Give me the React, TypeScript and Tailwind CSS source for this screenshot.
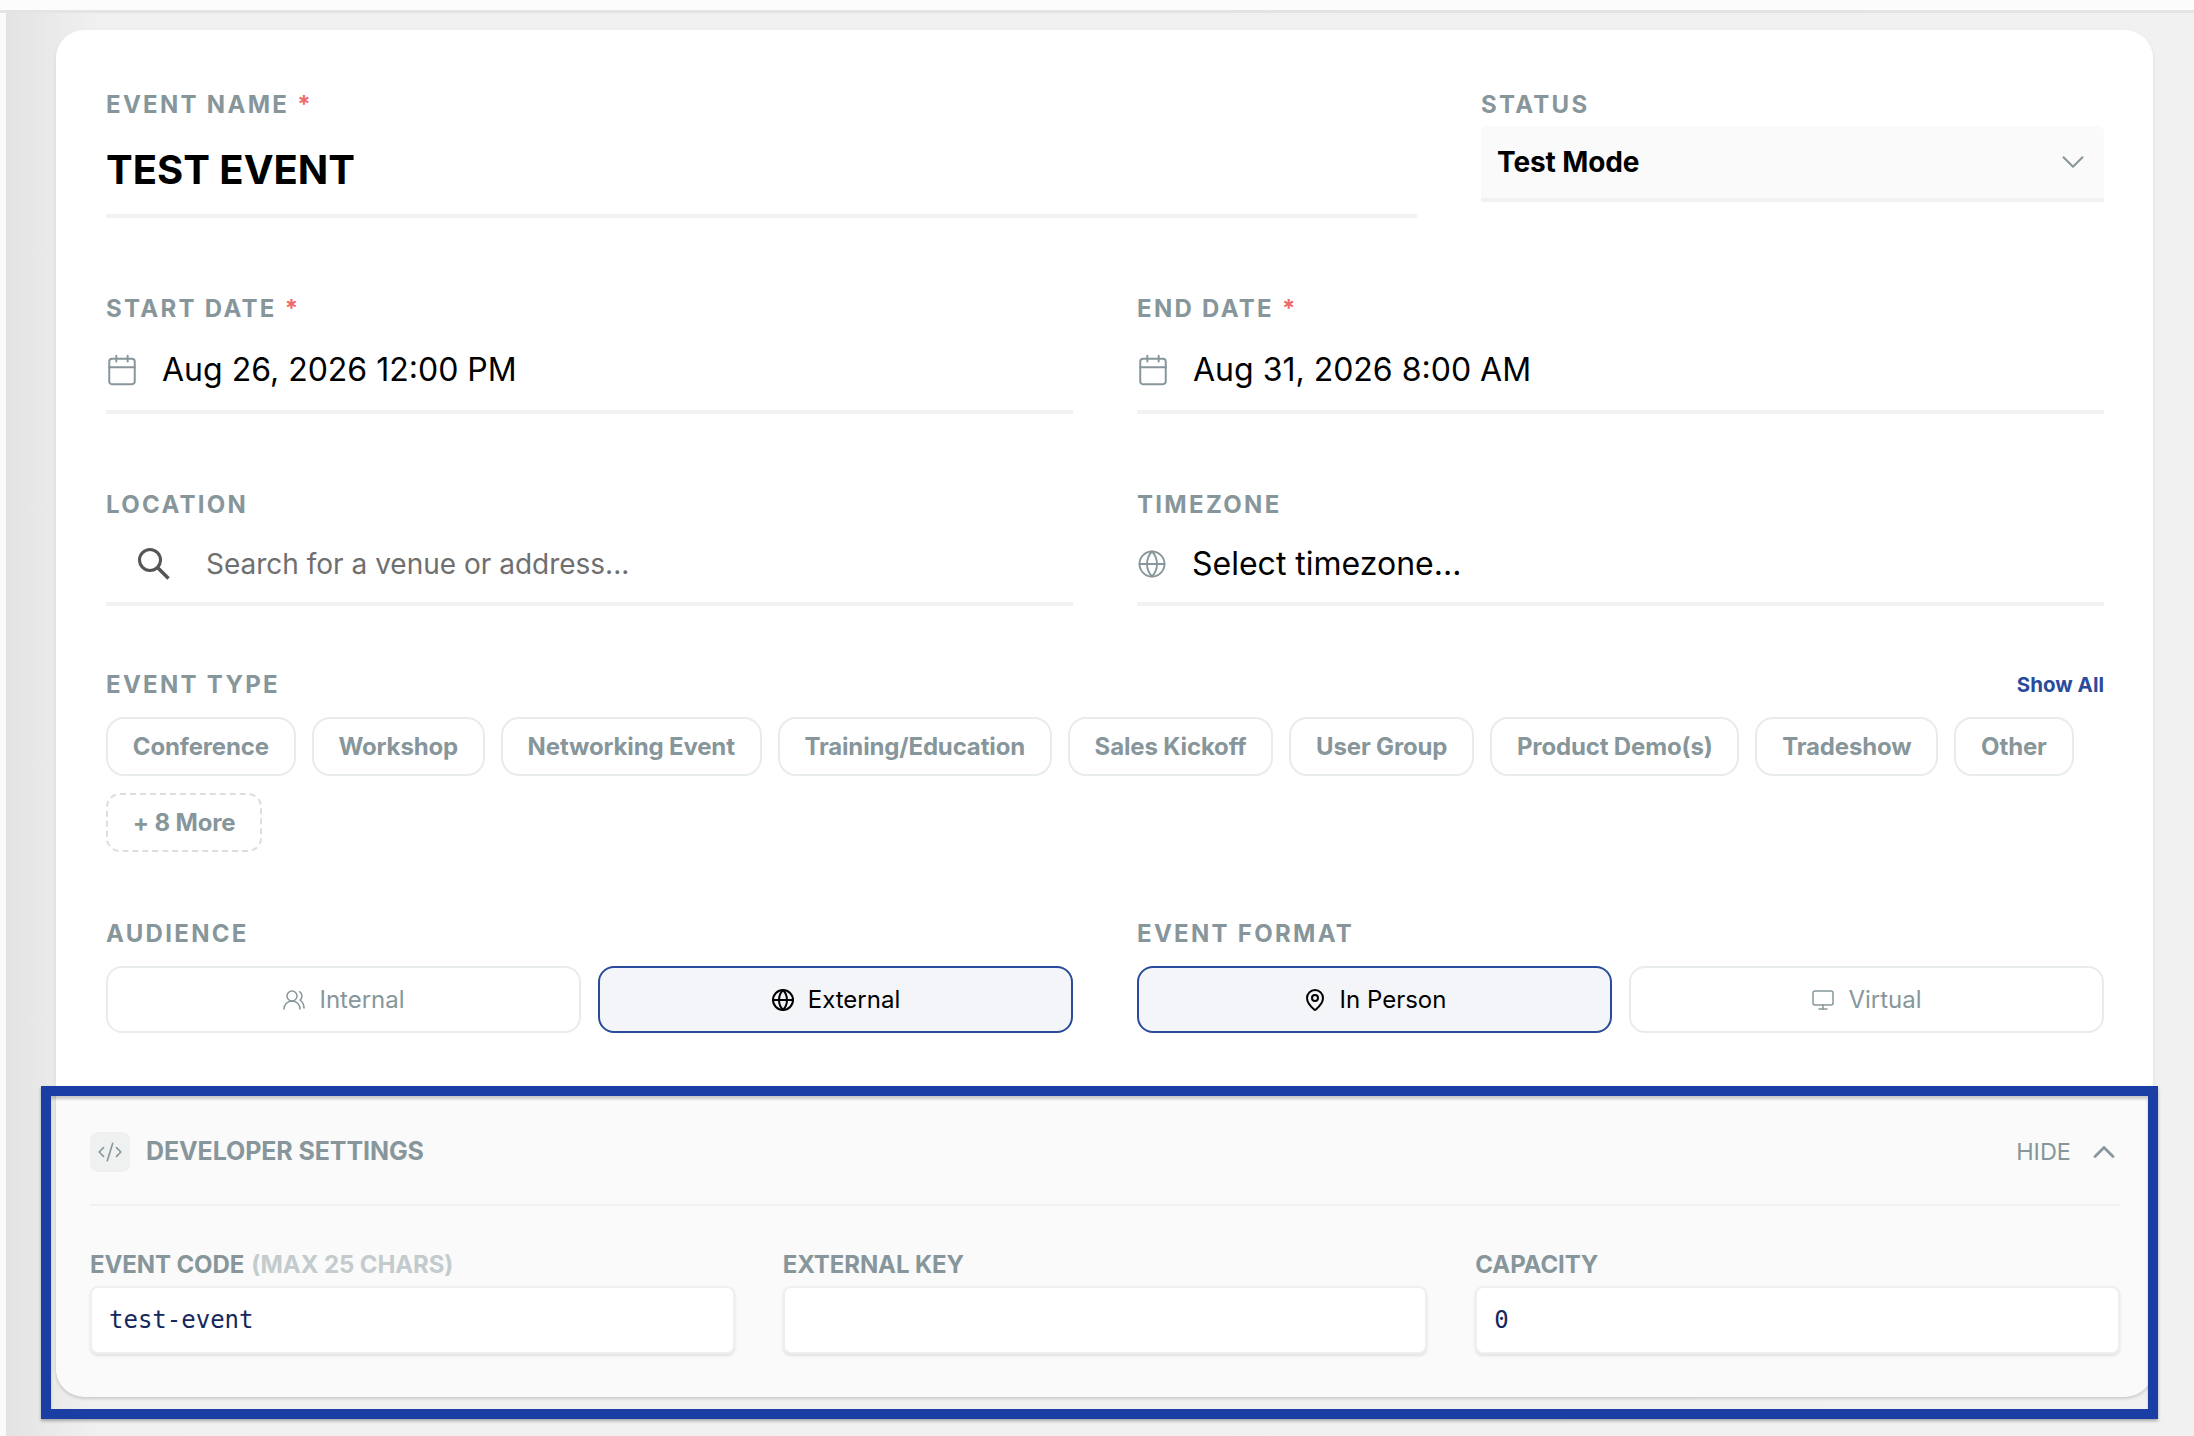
import { Calendar, ChevronDown, ChevronUp, CodeXml, Globe, MapPin, Monitor, UsersRound } from "lucide-react";
import type { ReactNode } from "react";

const eventTypes = [
  "Conference",
  "Workshop",
  "Networking Event",
  "Training/Education",
  "Sales Kickoff",
  "User Group",
  "Product Demo(s)",
  "Tradeshow",
  "Other",
];

function Label({ children, required }: { children: ReactNode; required?: boolean }) {
  return (
    <div className="h-[28px] text-[24px] leading-[30px] font-bold tracking-[2.3px] text-[#87969b]">
      {children}
      {required && <span className="ml-[8px] text-[#ef6a6a]">*</span>}
    </div>
  );
}

function DateField({ label, value }: { label: string; value: string }) {
  return (
    <div className="flex-1">
      <Label required>{label}</Label>
      <div className="flex h-[92px] items-center gap-[23px] border-b-4 border-[#f1f2f2] pt-[7px]">
        <Calendar className="-ml-[1px] h-[34px] w-[34px] text-[#87969b]" strokeWidth={1.4} />
        <span className="text-[32px] text-black">{value}</span>
      </div>
    </div>
  );
}

function ToggleButton({ icon, label, active }: { icon: ReactNode; label: string; active?: boolean }) {
  return (
    <div
      className={
        active
          ? "flex h-[67px] flex-1 items-center justify-center gap-[13px] rounded-[16px] border-2 border-[#2a4b9b] bg-[#f4f5f9] text-[24px] text-black"
          : "flex h-[67px] flex-1 items-center justify-center gap-[13px] rounded-[16px] border-2 border-[#e9ecec] bg-white text-[24px] text-[#87969b]"
      }
    >
      {icon}
      {label}
    </div>
  );
}

function DevField({ label, hint, value }: { label: string; hint?: string; value?: string }) {
  return (
    <div className="flex-1">
      <div className="h-[28px] text-[24px] leading-[30px] font-[650] tracking-[-0.1px] text-[#87969b]">
        {label}
        {hint && <span className="ml-[7px] text-[#c3cbcd]">{hint}</span>}
      </div>
      <div className="mt-[8px] flex h-[68px] items-center rounded-[8px] border-2 border-[#eeefef] bg-white pl-[17px] font-['DejaVu_Sans_Mono',monospace] text-[24px] text-[#14285c] shadow-[0_2px_3px_rgba(0,0,0,0.1)]">
        {value}
      </div>
    </div>
  );
}

export default function App() {
  return (
    <div className="relative h-[1436px] w-[2194px] overflow-hidden bg-[#f1f1f1] font-['Inter',sans-serif]">
      <div className="h-[13px] border-b-[3px] border-[#e3e4e4] bg-[#fcfcfc]" />
      <div className="flex h-[1423px]">
        <div className="w-[6px] bg-[#f9fafa]" />
        <div className="flex-1 bg-gradient-to-r from-[#e3e3e3] from-0% via-[#f0f0f0] via-[4%] to-[#f1f1f1] pt-[17px] pl-[50px]">
          <div className="h-[1366px] w-[2097px] rounded-[28px] bg-white pt-[60px] shadow-[0_2px_4px_rgba(0,0,0,0.08)]">
            <div className="pr-[49px] pl-[50px]">
              <div className="flex gap-[64px]">
                <div className="w-[1311px]">
                  <Label required>EVENT NAME</Label>
                  <div className="flex h-[100px] items-center border-b-4 border-[#f1f2f2] pt-[8px] text-[40px] font-bold text-black">
                    TEST EVENT
                  </div>
                </div>
                <div className="flex-1">
                  <Label>STATUS</Label>
                  <div className="mt-[8px] flex h-[76px] items-center justify-between rounded-t-[6px] border-b-4 border-[#f1f2f2] bg-[#fafafa] pr-[12px] pl-[16px]">
                    <span className="text-[28px] font-bold tracking-[-0.1px] text-black">Test Mode</span>
                    <ChevronDown className="h-[38px] w-[38px] text-[#87969b]" strokeWidth={1.3} />
                  </div>
                </div>
              </div>

              <div className="mt-[76px] flex gap-[64px]">
                <DateField label="START DATE" value="Aug 26, 2026 12:00 PM" />
                <DateField label="END DATE" value="Aug 31, 2026 8:00 AM" />
              </div>

              <div className="mt-[76px] flex gap-[64px]">
                <div className="flex-1">
                  <Label>LOCATION</Label>
                  <div className="flex h-[88px] items-center gap-[36px] border-b-4 border-[#f1f2f2] pt-[7px] pl-[31px]">
                    <svg viewBox="0 0 33 33" className="h-[33px] w-[33px] text-[#555]" fill="none" stroke="currentColor" strokeWidth={3}>
                      <circle cx="13" cy="13" r="10.5" />
                      <path d="M21 21l10.5 10.5" strokeWidth={3.6} />
                    </svg>
                    <span className="text-[28px] text-[#6f6f6f]">Search for a venue or address...</span>
                  </div>
                </div>
                <div className="flex-1">
                  <Label>TIMEZONE</Label>
                  <div className="flex h-[88px] items-center gap-[25px] border-b-4 border-[#f1f2f2] pt-[7px]">
                    <Globe className="h-[30px] w-[30px] text-[#87969b]" strokeWidth={1.5} />
                    <span className="text-[32px] text-black">Select timezone...</span>
                  </div>
                </div>
              </div>

              <div className="mt-[64px] flex h-[28px] items-start justify-between">
                <Label>EVENT TYPE</Label>
                <span className="text-[20.5px] leading-[30px] font-bold text-[#2a4b9b]">Show All</span>
              </div>
              <div className="mt-[19px] flex flex-wrap gap-x-[16px] gap-y-[17px]">
                {eventTypes.map((t) => (
                  <div
                    key={t}
                    className="flex h-[59px] items-center rounded-[18px] border-2 border-[#e9ecec] px-[24.8px] text-[24px] font-[650] tracking-[-0.15px] text-[#87969b]"
                  >
                    {t}
                  </div>
                ))}
                <div className="flex h-[59px] items-center rounded-[14px] border-2 border-dashed border-[#dcdfe0] px-[24.8px] text-[24px] font-[650] tracking-[-0.15px] text-[#87969b]">
                  + 8 More
                </div>
              </div>

              <div className="mt-[67px] flex gap-[64px]">
                <div className="flex-1">
                  <Label>AUDIENCE</Label>
                  <div className="mt-[19px] flex gap-[17px]">
                    <ToggleButton icon={<UsersRound className="h-[24px] w-[24px]" strokeWidth={1.5} />} label="Internal" />
                    <ToggleButton icon={<Globe className="h-[24px] w-[24px]" strokeWidth={2} />} label="External" active />
                  </div>
                </div>
                <div className="flex-1">
                  <Label>EVENT FORMAT</Label>
                  <div className="mt-[19px] flex gap-[17px]">
                    <ToggleButton icon={<MapPin className="h-[24px] w-[24px]" strokeWidth={2} />} label="In Person" active />
                    <ToggleButton icon={<Monitor className="h-[24px] w-[24px]" strokeWidth={1.5} />} label="Virtual" />
                  </div>
                </div>
              </div>
            </div>

            <div className="mt-[57px] rounded-b-[28px] bg-[#fafafa] pt-[42px] pr-[33px] pb-[43px] pl-[34px] shadow-[0_2px_3px_rgba(0,0,0,0.1)]">
              <div className="flex items-center justify-between border-b-2 border-[#f0f1f1] pb-[32px]">
                <div className="flex items-center gap-[16px]">
                  <div className="flex h-[40px] w-[40px] items-center justify-center rounded-[8px] bg-[#eff1f1]">
                    <CodeXml className="h-[26px] w-[26px] text-[#87969b]" strokeWidth={1.5} />
                  </div>
                  <span className="text-[25px] font-bold tracking-[-0.1px] text-[#87969b]">DEVELOPER SETTINGS</span>
                </div>
                <div className="flex items-center gap-[15px] text-[23.5px] text-[#87969b]">
                  HIDE
                  <ChevronUp className="-mr-[2px] h-[36px] w-[36px]" strokeWidth={1.8} />
                </div>
              </div>
              <div className="mt-[44px] flex gap-[48px]">
                <DevField label="EVENT CODE" hint="(MAX 25 CHARS)" value="test-event" />
                <DevField label="EXTERNAL KEY" />
                <DevField label="CAPACITY" value="0" />
              </div>
            </div>
          </div>
        </div>
      </div>
      {/* annotation frame drawn over the screenshot */}
      <div className="absolute top-[1086px] left-[41px] h-[333px] w-[2117px] border-[10px] border-[#1a3ea3] shadow-[0_2px_3px_rgba(0,0,0,0.3),inset_0_3px_3px_rgba(0,0,0,0.2)]" />
    </div>
  );
}
